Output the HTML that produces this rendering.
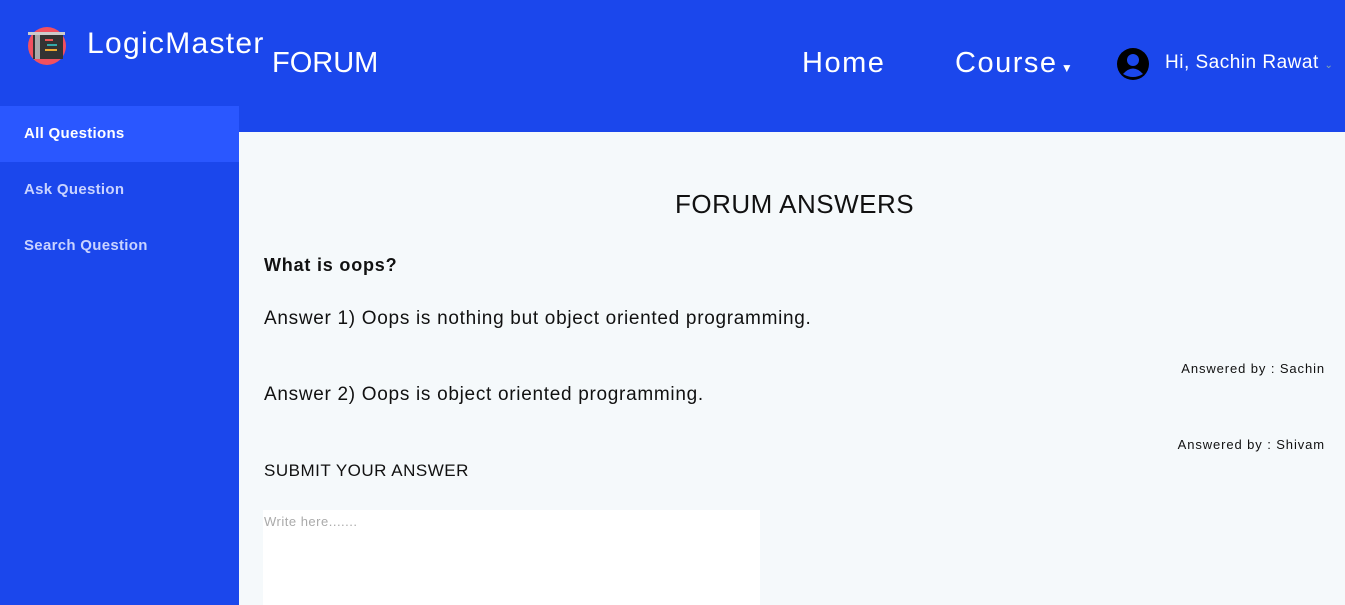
<!DOCTYPE html>
<html><head><style>
*{margin:0;padding:0;box-sizing:border-box}
body{width:1345px;height:605px;overflow:hidden;background:#f5f9fb;font-family:"Liberation Sans",sans-serif;position:relative}
.top{position:absolute;left:0;top:0;width:1345px;height:132px;background:#1b47ec}
.side{position:absolute;left:0;top:106px;width:239px;height:499px;background:#1b47ec}
.side div{height:56px;line-height:56px;padding-left:24px;color:#c9d3ff;font-weight:bold;font-size:15px;letter-spacing:0.3px}
.side .act{background:#2a57ff;color:#fff}
.w{position:absolute;color:#fff;white-space:nowrap}
.t{position:absolute;color:#111;white-space:nowrap}
</style></head><body>
<div class="top"></div>
<div class="side"><div class="act">All Questions</div><div>Ask Question</div><div>Search Question</div></div>
<svg style="position:absolute;left:25px;top:24px" width="50" height="44">
<circle cx="22" cy="22" r="19" fill="#f25060"/>
<rect x="8" y="9" width="30" height="26" fill="#333"/>
<rect x="3" y="8" width="37" height="3" fill="#ccc"/>
<rect x="10" y="11" width="5" height="24" fill="#aaa"/>
<rect x="20" y="15" width="8" height="2" fill="#e55"/><rect x="22" y="20" width="10" height="2" fill="#3aa"/><rect x="20" y="25" width="12" height="2" fill="#ea3"/>
</svg>
<div class="w" style="left:87px;top:27px;font-size:30px;letter-spacing:1.3px">LogicMaster</div>
<div class="w" style="left:272px;top:47px;font-size:29px">FORUM</div>
<div class="w" style="left:802px;top:47px;font-size:29px;letter-spacing:1.5px">Home</div>
<div class="w" style="left:955px;top:47px;font-size:29px;letter-spacing:1.5px">Course<span style="font-size:12px;letter-spacing:0"> ▼</span></div>
<svg style="position:absolute;left:1117px;top:48px" width="32" height="32"><circle cx="16" cy="16" r="16" fill="#000"/><circle cx="16" cy="12" r="6" fill="#1b47ec"/><path d="M6 26 Q16 15 26 26 Q16 32 6 26Z" fill="#1b47ec"/></svg>
<div class="w" style="left:1165px;top:52px;font-size:19px;letter-spacing:0.5px">Hi, Sachin Rawat <span style="font-size:10px;color:#8aa">⌄</span></div>
<div class="t" style="left:675px;top:189px;font-size:26px;letter-spacing:0.5px">FORUM ANSWERS</div>
<div class="t" style="left:264px;top:255px;font-size:18px;font-weight:bold;letter-spacing:0.8px">What is oops?</div>
<div class="t" style="left:264px;top:308px;font-size:19px;letter-spacing:0.7px">Answer 1) Oops is nothing but object oriented programming.</div>
<div class="t" style="right:20px;top:361px;font-size:13px;letter-spacing:0.9px">Answered by : Sachin</div>
<div class="t" style="left:264px;top:384px;font-size:19px;letter-spacing:0.7px">Answer 2) Oops is object oriented programming.</div>
<div class="t" style="right:20px;top:437px;font-size:13px;letter-spacing:0.9px">Answered by : Shivam</div>
<div class="t" style="left:264px;top:461px;font-size:17px;letter-spacing:0.5px">SUBMIT YOUR ANSWER</div>
<div style="position:absolute;left:263px;top:510px;width:497px;height:95px;background:#fff;color:#aaa;font-size:13px;padding:4px 0 0 1px;letter-spacing:0.5px">Write here.......</div>
</body></html>
